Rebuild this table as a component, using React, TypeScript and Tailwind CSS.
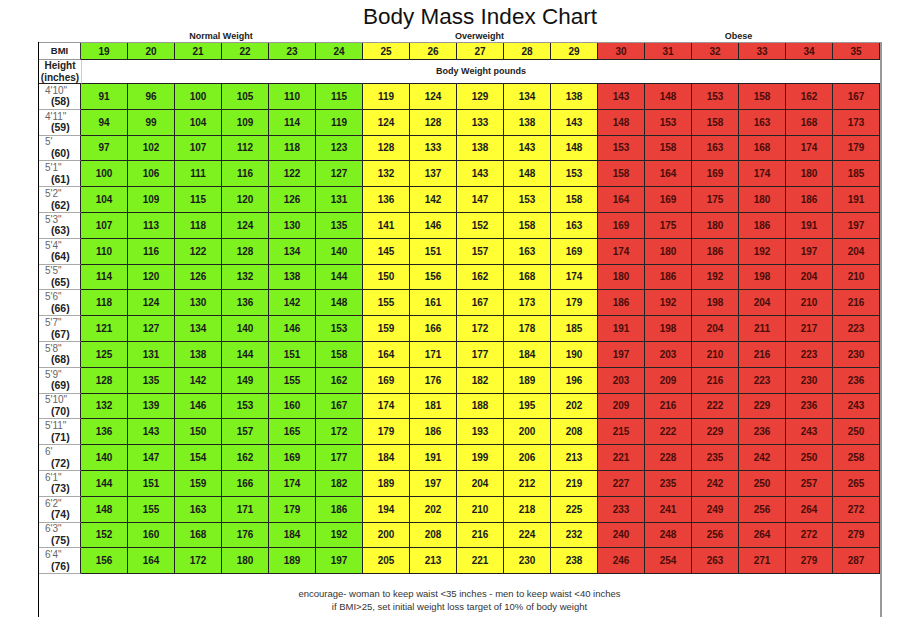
import React from "react";

const bmis = [19, 20, 21, 22, 23, 24, 25, 26, 27, 28, 29, 30, 31, 32, 33, 34, 35];

const rows: [string, number, number[]][] = [
  ["4'10\"", 58, [91, 96, 100, 105, 110, 115, 119, 124, 129, 134, 138, 143, 148, 153, 158, 162, 167]],
  ["4'11\"", 59, [94, 99, 104, 109, 114, 119, 124, 128, 133, 138, 143, 148, 153, 158, 163, 168, 173]],
  ["5'", 60, [97, 102, 107, 112, 118, 123, 128, 133, 138, 143, 148, 153, 158, 163, 168, 174, 179]],
  ["5'1\"", 61, [100, 106, 111, 116, 122, 127, 132, 137, 143, 148, 153, 158, 164, 169, 174, 180, 185]],
  ["5'2\"", 62, [104, 109, 115, 120, 126, 131, 136, 142, 147, 153, 158, 164, 169, 175, 180, 186, 191]],
  ["5'3\"", 63, [107, 113, 118, 124, 130, 135, 141, 146, 152, 158, 163, 169, 175, 180, 186, 191, 197]],
  ["5'4\"", 64, [110, 116, 122, 128, 134, 140, 145, 151, 157, 163, 169, 174, 180, 186, 192, 197, 204]],
  ["5'5\"", 65, [114, 120, 126, 132, 138, 144, 150, 156, 162, 168, 174, 180, 186, 192, 198, 204, 210]],
  ["5'6\"", 66, [118, 124, 130, 136, 142, 148, 155, 161, 167, 173, 179, 186, 192, 198, 204, 210, 216]],
  ["5'7\"", 67, [121, 127, 134, 140, 146, 153, 159, 166, 172, 178, 185, 191, 198, 204, 211, 217, 223]],
  ["5'8\"", 68, [125, 131, 138, 144, 151, 158, 164, 171, 177, 184, 190, 197, 203, 210, 216, 223, 230]],
  ["5'9\"", 69, [128, 135, 142, 149, 155, 162, 169, 176, 182, 189, 196, 203, 209, 216, 223, 230, 236]],
  ["5'10\"", 70, [132, 139, 146, 153, 160, 167, 174, 181, 188, 195, 202, 209, 216, 222, 229, 236, 243]],
  ["5'11\"", 71, [136, 143, 150, 157, 165, 172, 179, 186, 193, 200, 208, 215, 222, 229, 236, 243, 250]],
  ["6'", 72, [140, 147, 154, 162, 169, 177, 184, 191, 199, 206, 213, 221, 228, 235, 242, 250, 258]],
  ["6'1\"", 73, [144, 151, 159, 166, 174, 182, 189, 197, 204, 212, 219, 227, 235, 242, 250, 257, 265]],
  ["6'2\"", 74, [148, 155, 163, 171, 179, 186, 194, 202, 210, 218, 225, 233, 241, 249, 256, 264, 272]],
  ["6'3\"", 75, [152, 160, 168, 176, 184, 192, 200, 208, 216, 224, 232, 240, 248, 256, 264, 272, 279]],
  ["6'4\"", 76, [156, 164, 172, 180, 189, 197, 205, 213, 221, 230, 238, 246, 254, 263, 271, 279, 287]],
];

function cellClass(i: number) {
  if (i < 6) return "bg-[#7df21f] text-[#1a1a1a]";
  if (i < 11) return "bg-[#ffff33] text-[#1a1a1a]";
  return "bg-[#e9413a] text-[#4a0c08]";
}

const gridCols = "grid grid-cols-[42px_repeat(17,minmax(0,1fr))]";

export default function App() {
  return (
    <div
      className="w-[922px] h-[617px] bg-white overflow-hidden"
      style={{ fontFamily: '"Liberation Sans", Arial, sans-serif' }}
    >
      <div className="h-[30px] pl-[38px] text-center text-[22.5px] leading-[34px] text-[#111]">
        Body Mass Index Chart
      </div>
      <div className="ml-[38px] w-[842px] h-[12px] grid grid-cols-[42px_282px_235px_283px] text-[9px] font-bold leading-[12px] text-[#222]">
        <div />
        <div className="text-center">Normal Weight</div>
        <div className="text-center">Overweight</div>
        <div className="text-center">Obese</div>
      </div>
      <div className="ml-[38px] w-[844px] border-l border-l-black border-r-2 border-r-[#999]">
        {/* BMI header row */}
        <div className={`${gridCols} h-[18px] border-t border-t-[#999]`}>
          <div className="flex items-center justify-center border-r border-r-[#333] border-b border-b-[#999] text-[9.5px] font-bold text-[#222]">
            BMI
          </div>
          {bmis.map((b, i) => (
            <div
              key={b}
              className={`flex items-center justify-center border-r border-b border-[#222] text-[10px] font-bold ${cellClass(i)}`}
            >
              {b}
            </div>
          ))}
        </div>
        {/* Height row */}
        <div className={`${gridCols} h-[24px]`}>
          <div className="flex flex-col items-center justify-center border-b border-b-[#222] text-[10px] font-bold leading-[11.5px] text-[#222]">
            <span>Height</span>
            <span>(inches)</span>
          </div>
          <div className="col-span-17 flex items-center justify-center border-l border-l-[#ccc] border-b border-b-[#222] text-[9px] font-bold text-[#222]">
            Body Weight pounds
          </div>
        </div>
        {rows.map(([ft, inch, vals]) => (
          <div key={inch} className={`${gridCols} h-[25.8px]`}>
            <div className="flex flex-col justify-center border-r border-r-[#222] border-b border-b-[#aaa] pl-[6px] leading-[11.5px]">
              <span className="text-[10px] text-[#666]">{ft}</span>
              <span className="pl-[6px] text-[10.5px] font-bold text-[#222]">({inch})</span>
            </div>
            {vals.map((v, i) => (
              <div
                key={i}
                className={`flex items-center justify-center border-r border-b border-[#222] text-[10px] font-bold ${cellClass(i)}`}
              >
                {v}
              </div>
            ))}
          </div>
        ))}
        <div className="h-[44px] flex flex-col items-center pt-[13px] text-[9.5px] leading-[13px] text-[#333]">
          <span>encourage- woman to keep waist &lt;35 inches - men to keep waist &lt;40 inches</span>
          <span>if BMI&gt;25, set initial weight loss target of 10% of body weight</span>
        </div>
      </div>
    </div>
  );
}
